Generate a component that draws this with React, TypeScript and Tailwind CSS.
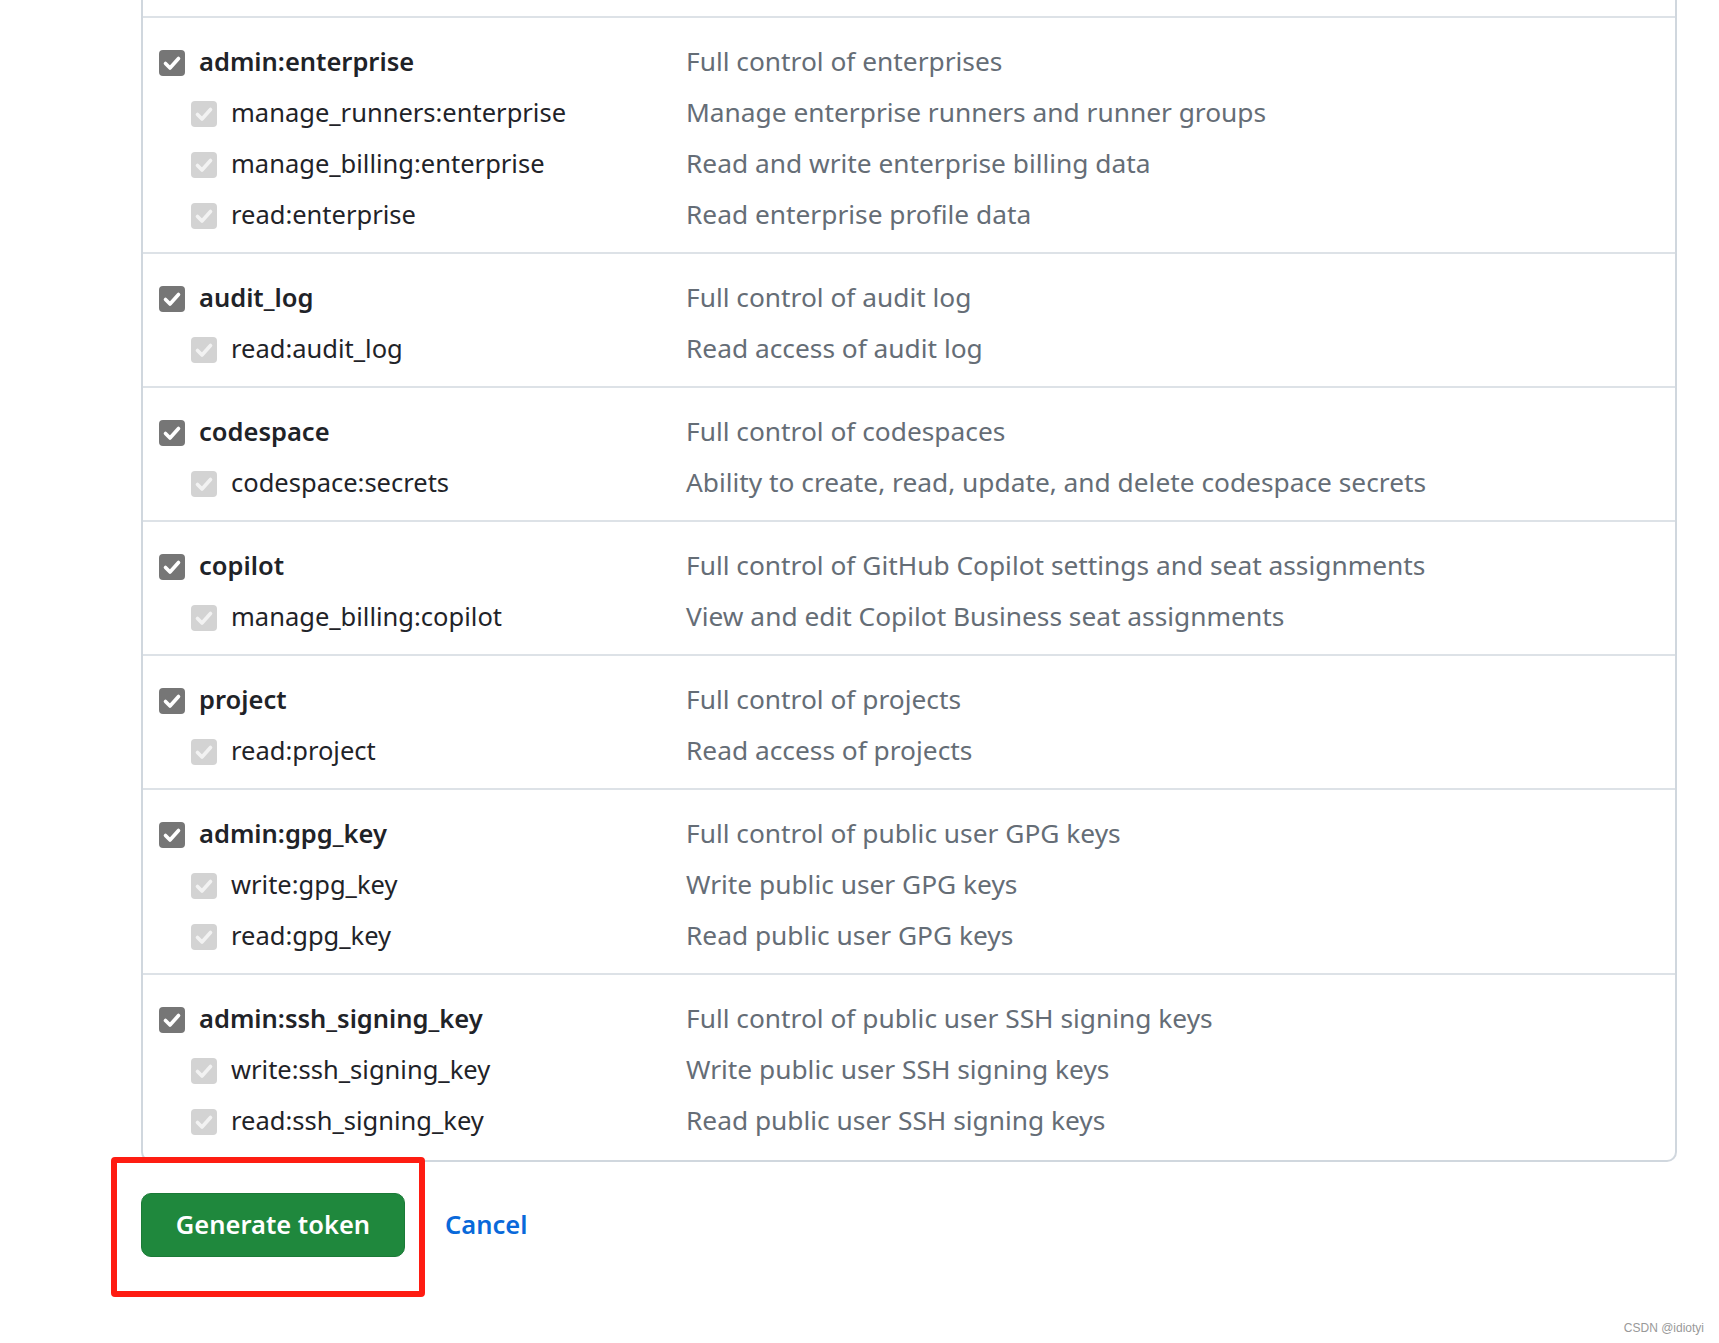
import React from "react";

type Scope = { name: string; desc: string };
type Group = { main: Scope; subs: Scope[] };

const groups: Group[] = [
  {
    main: { name: "admin:enterprise", desc: "Full control of enterprises" },
    subs: [
      { name: "manage_runners:enterprise", desc: "Manage enterprise runners and runner groups" },
      { name: "manage_billing:enterprise", desc: "Read and write enterprise billing data" },
      { name: "read:enterprise", desc: "Read enterprise profile data" },
    ],
  },
  {
    main: { name: "audit_log", desc: "Full control of audit log" },
    subs: [{ name: "read:audit_log", desc: "Read access of audit log" }],
  },
  {
    main: { name: "codespace", desc: "Full control of codespaces" },
    subs: [{ name: "codespace:secrets", desc: "Ability to create, read, update, and delete codespace secrets" }],
  },
  {
    main: { name: "copilot", desc: "Full control of GitHub Copilot settings and seat assignments" },
    subs: [{ name: "manage_billing:copilot", desc: "View and edit Copilot Business seat assignments" }],
  },
  {
    main: { name: "project", desc: "Full control of projects" },
    subs: [{ name: "read:project", desc: "Read access of projects" }],
  },
  {
    main: { name: "admin:gpg_key", desc: "Full control of public user GPG keys" },
    subs: [
      { name: "write:gpg_key", desc: "Write public user GPG keys" },
      { name: "read:gpg_key", desc: "Read public user GPG keys" },
    ],
  },
  {
    main: { name: "admin:ssh_signing_key", desc: "Full control of public user SSH signing keys" },
    subs: [
      { name: "write:ssh_signing_key", desc: "Write public user SSH signing keys" },
      { name: "read:ssh_signing_key", desc: "Read public user SSH signing keys" },
    ],
  },
];

function Check({ main }: { main?: boolean }) {
  return (
    <div
      className={
        main
          ? "flex h-[26px] w-[26px] shrink-0 items-center justify-center rounded-[4px] bg-[#767676]"
          : "flex h-[26px] w-[26px] shrink-0 items-center justify-center rounded-[4px] bg-[#d3d3d3]"
      }
    >
      <svg width="26" height="26" viewBox="0 0 26 26" fill="none">
        <path
          d="M6.5 13.5 L11 18 L19.5 8.5"
          stroke={main ? "#ffffff" : "#f2f2f2"}
          strokeWidth="3.6"
          strokeLinecap="round"
          strokeLinejoin="round"
        />
      </svg>
    </div>
  );
}

export default function App() {
  return (
    <div
      className="relative min-h-[1343px] w-full bg-white"
      style={{ fontFamily: '"Noto Sans", "Open Sans", sans-serif' }}
    >
      <div className="pl-[141px]">
        <div className="w-[1536px] rounded-b-[10px] border-x-2 border-b-2 border-[#d0d7de]">
          <div className="h-[16px]" />
          {groups.map((g, i) => (
            <div
              key={g.main.name}
              className={
                i === groups.length - 1
                  ? "border-t-2 border-[#dde2e7] pb-[13px] pt-[19px]"
                  : "border-t-2 border-[#dde2e7] pb-[11px] pt-[19px]"
              }
            >
              <div className="flex h-[51px] items-center">
                <div className="flex w-[543px] items-center gap-[14px] pl-[16px]">
                  <Check main />
                  <span className="-mt-[2px] text-[25.5px] font-semibold text-[#1f2328]">{g.main.name}</span>
                </div>
                <span className="-mt-[2px] text-[26.3px] text-[#656d76]">{g.main.desc}</span>
              </div>
              {g.subs.map((s) => (
                <div key={s.name} className="flex h-[51px] items-center">
                  <div className="flex w-[543px] items-center gap-[14px] pl-[48px]">
                    <Check />
                    <span className="-mt-[2px] text-[25.5px] text-[#1f2328]">{s.name}</span>
                  </div>
                  <span className="-mt-[2px] text-[26.3px] text-[#656d76]">{s.desc}</span>
                </div>
              ))}
            </div>
          ))}
        </div>
        <div className="mt-[31px] flex items-center gap-[40px]">
          <button className="flex h-[64px] w-[264px] items-center justify-center rounded-[10px] border border-[#1b7a37] bg-[#1f883d] pb-[2px] text-[25.5px] font-semibold text-white">
            Generate token
          </button>
          <span className="-mt-[2px] text-[25.5px] font-semibold text-[#0969da]">Cancel</span>
        </div>
      </div>
      <div className="pointer-events-none absolute left-[111px] top-[1157px] h-[140px] w-[314px] rounded-[4px] border-[6px] border-[#fe1c12]" />
      <div
        className="absolute right-[15px] top-[1319px] text-[12px] text-[#999999]"
        style={{ fontFamily: '"Liberation Sans", Arial, sans-serif' }}
      >
        CSDN @idiotyi
      </div>
    </div>
  );
}
